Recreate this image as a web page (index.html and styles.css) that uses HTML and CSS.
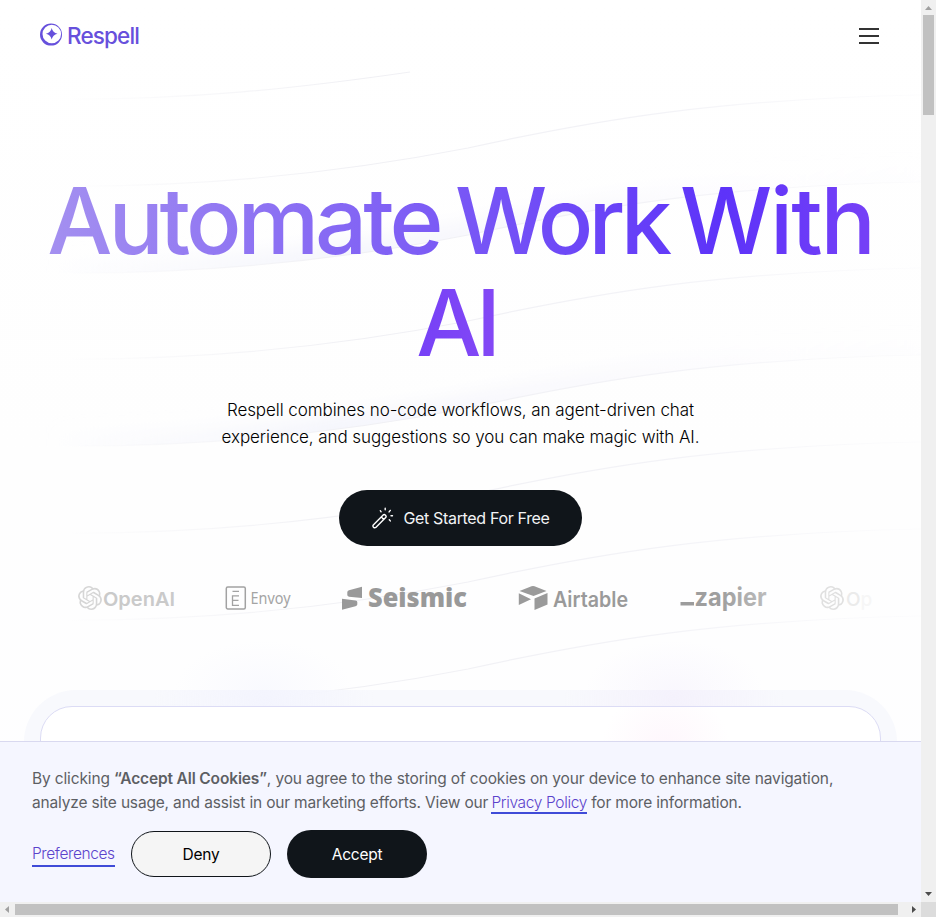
FILE: index.html
```html
<!DOCTYPE html>
<html lang="en">
<head>
<meta charset="utf-8">
<title>Respell</title>
<link rel="stylesheet" href="styles.css">
</head>
<body>
<div class="window">
  <div class="viewport">
    <svg class="waves" viewBox="0 0 921 741" aria-hidden="true">
      <defs>
        <linearGradient id="line" gradientUnits="userSpaceOnUse" x1="60" y1="0" x2="921" y2="0">
          <stop offset="0" stop-color="#f0f0f4" stop-opacity="0"/>
          <stop offset=".35" stop-color="#f0f0f4"/>
          <stop offset=".7" stop-color="#f3f3f7"/>
          <stop offset="1" stop-color="#f5f5f9" stop-opacity=".2"/>
        </linearGradient>
        <linearGradient id="haze" gradientUnits="userSpaceOnUse" x1="30" y1="0" x2="800" y2="0">
          <stop offset="0" stop-color="#f4f5fc" stop-opacity="0"/>
          <stop offset=".4" stop-color="#f4f5fc"/>
          <stop offset="1" stop-color="#f7f5fc" stop-opacity=".1"/>
        </linearGradient>
        <filter id="soft" x="-10%" y="-50%" width="120%" height="200%"><feGaussianBlur stdDeviation="9"/></filter>
        <path id="wave" d="M60 359C190 360 330 348 468 321C600 292 720 272 921 268"/>
        <clipPath id="above"><path d="M0 200H921V268C720 272 600 292 468 321C330 348 190 360 60 359H0Z"/></clipPath>
      </defs>
      <g fill="none" stroke="url(#haze)" stroke-width="26">
        <g transform="translate(0 -86)" clip-path="url(#above)"><use href="#wave" filter="url(#soft)"/></g>
        <g transform="translate(0 87)" clip-path="url(#above)"><use href="#wave" filter="url(#soft)"/></g>
      </g>
      <g fill="none" stroke="url(#line)" stroke-width="1.2">
        <path d="M60 99C190 100 300 88 410 72"/>
        <use href="#wave" y="-173"/><use href="#wave" y="-86"/><use href="#wave"/>
        <use href="#wave" y="87"/><use href="#wave" y="174"/><use href="#wave" y="261"/><use href="#wave" y="348"/>
      </g>
    </svg>

    <header class="nav">
      <a class="brand">
        <svg width="24" height="24" viewBox="0 0 24 24" aria-hidden="true">
          <path fill="#6650dc" fill-rule="evenodd" d="M11 .6a11 11 0 1 0 0 22 11 11 0 0 0 0-22Zm.8 1.1a9.3 9.3 0 1 1 0 18.600a9.300 9.300 0 0 1 0-18.600Z"/>
          <path fill="#6650dc" d="M11.700 5Q12.700 9.800 17.500 10.800Q12.700 11.800 11.700 16.600Q10.700 11.800 5.900 10.800Q10.700 9.800 11.700 5Z"/>
        </svg>
        <span class="brand-name">Respell</span>
      </a>
      <div class="menu"><i></i><i></i><i></i></div>
    </header>

    <main class="hero">
      <h1><span class="fill"><span class="automate">Automate</span> <span class="work">Work</span> <span class="with">With</span><br><span class="ai">AI</span></span></h1>
      <p class="lead"><span class="lead-a">Respell combines no-code workflows, an agent-driven chat</span><br><span class="lead-b">experience, and suggestions so you can make magic with AI.</span></p>
      <a class="cta">
        <svg width="24" height="24" viewBox="0 0 24 24" fill="none" stroke="#fff" stroke-width="1.400" stroke-linecap="round" stroke-linejoin="round" aria-hidden="true">
          <path d="M2.300 18.900 12.200 8.900Q13.300 8 14.500 9.200Q15.700 10.500 14.700 11.500L4.800 21.500Q3.700 22.300 2.500 21.200Q1.500 20 2.300 18.900ZM10.300 11l2.500 2.500M9.300 4.700l.8 1.100M14.200 2.200v1.500M19.300 4.400l-1.200 1.500M21.500 9.700H20M18.300 13.800l1 1.100"/>
        </svg>
        <span>Get Started For Free</span>
      </a>
    </main>

    <section class="logos">
      <svg class="openai" width="100" height="32" viewBox="0 0 100 32">
        <defs><path id="knot" d="M22.2819 9.8211a5.9847 5.9847 0 0 0-.5157-4.9108 6.0462 6.0462 0 0 0-6.5098-2.9A6.0651 6.0651 0 0 0 4.9807 4.1818a5.9847 5.9847 0 0 0-3.9977 2.9 6.0462 6.0462 0 0 0 .7427 7.0966 5.98 5.98 0 0 0 .511 4.9107 6.051 6.051 0 0 0 6.5146 2.9001A5.9847 5.9847 0 0 0 13.2599 24a6.0557 6.0557 0 0 0 5.7718-4.2058 5.9894 5.9894 0 0 0 3.9977-2.9001 6.0557 6.0557 0 0 0-.7475-7.0729zm-9.022 12.6081a4.4755 4.4755 0 0 1-2.8764-1.0408l.1419-.0804 4.7783-2.7582a.7948.7948 0 0 0 .3927-.6813v-6.7369l2.02 1.1686a.071.071 0 0 1 .038.052v5.5826a4.504 4.504 0 0 1-4.4945 4.4944zm-9.6607-4.1254a4.4708 4.4708 0 0 1-.5346-3.0137l.142.0852 4.783 2.7582a.7712.7712 0 0 0 .7806 0l5.8428-3.3685v2.3324a.0804.0804 0 0 1-.0332.0615L9.74 19.9502a4.4992 4.4992 0 0 1-6.1408-1.6464zM2.3408 7.8956a4.485 4.485 0 0 1 2.3655-1.9728V11.6a.7664.7664 0 0 0 .3879.6765l5.8144 3.3543-2.0201 1.1685a.0757.0757 0 0 1-.071 0l-4.8303-2.7865A4.504 4.504 0 0 1 2.3408 7.872zm16.5963 3.8558L13.1038 8.364 15.1192 7.2a.0757.0757 0 0 1 .071 0l4.8303 2.7913a4.4944 4.4944 0 0 1-.6765 8.1042v-5.6772a.79.79 0 0 0-.407-.667zm2.0107-3.0231l-.142-.0852-4.7735-2.7818a.7759.7759 0 0 0-.7854 0L9.409 9.2297V6.8974a.0662.0662 0 0 1 .0284-.0615l4.8303-2.7866a4.4992 4.4992 0 0 1 6.6802 4.66zM8.3065 12.863l-2.02-1.1638a.0804.0804 0 0 1-.038-.0567V6.0742a4.4992 4.4992 0 0 1 7.3757-3.4537l-.142.0805L8.704 5.459a.7948.7948 0 0 0-.3927.6813zm1.0976-2.3654l2.602-1.4998 2.6069 1.4998v2.9994l-2.5974 1.4997-2.6067-1.4997Z"/></defs>
        <use href="#knot" transform="translate(0 4)" fill="#d6d6d6"/>
        <text x="25" y="23.500" textLength="72" lengthAdjust="spacingAndGlyphs" class="t-openai">OpenAI</text>
      </svg>
      <svg class="envoy" width="68" height="32" viewBox="0 0 68 32">
        <rect x="2.300" y="5" width="19" height="22" rx="1.500" fill="none" stroke="#a2a2a2" stroke-width="1.500"/>
        <path d="M8.500 9.300h6.500M15 13.800H8.500v9.500H15M8.500 18.400h6" fill="none" stroke="#a2a2a2" stroke-width="1.300"/>
        <text x="26.500" y="22" textLength="40" lengthAdjust="spacingAndGlyphs" class="t-envoy">Envoy</text>
      </svg>
      <svg class="seismic" width="128" height="32" viewBox="0 0 128 32">
        <path d="M8 8.300 21 4.800V16L8 14.700Q6.300 14.400 6.300 13V10.300Q6.300 8.800 8 8.300ZM1 16.800 14.500 18.400Q16.300 18.700 16.300 20V22.500Q16.300 23.800 14.500 24.300L1 27.800Z" fill="#999"/>
        <text x="27" y="24.500" textLength="99" lengthAdjust="spacingAndGlyphs" class="t-seismic">Seismic</text>
      </svg>
      <svg class="airtable" width="112" height="32" viewBox="0 0 112 32">
        <path d="M1.500 9 13.500 4.300Q15 3.800 16.500 4.300L28.500 9 15.500 14ZM.8 11.300V23L13 17.300ZM29.500 11V22.500L16.500 28V16.500Z" fill="#9a9a9a"/>
        <text x="35" y="24.500" textLength="75" lengthAdjust="spacingAndGlyphs" class="t-airtable">Airtable</text>
      </svg>
      <svg class="zapier" width="90" height="34" viewBox="0 0 90 34">
        <defs><linearGradient id="zf" gradientUnits="userSpaceOnUse" x1="40" x2="88" y1="0" y2="0"><stop stop-color="#9e9e9e"/><stop offset="1" stop-color="#bdbdbd"/></linearGradient></defs>
        <path d="M.5 21h13.500v3.500H.5Z" fill="#9c9c9c"/>
        <text x="14.500" y="24.500" textLength="72" lengthAdjust="spacingAndGlyphs" class="t-zapier" fill="url(#zf)">zapier</text>
      </svg>
      <svg class="openai2" width="56" height="32" viewBox="0 0 56 32">
        <use href="#knot" transform="translate(0 4)" fill="#e0e0e0"/>
        <text x="26" y="23.500" class="t-op"><tspan fill="#ebebeb">O</tspan><tspan fill="#f6f6f6">p</tspan></text>
      </svg>
    </section>

    <div class="halo"><div class="card"></div></div>

    <aside class="cookies">
      <p><span class="note-a">By clicking <b>“Accept All Cookies”</b>, you agree to the storing of cookies on your device to enhance site navigation,</span><br><span class="note-b">analyze site usage, and assist in our marketing efforts. View our <a class="link policy">Privacy Policy</a> for more information.</span></p>
      <div class="actions">
        <a class="link pref">Preferences</a>
        <a class="btn deny">Deny</a>
        <a class="btn accept">Accept</a>
      </div>
    </aside>
  </div>
  <div class="vbar">
    <svg width="15" height="15" viewBox="0 0 15 15"><path d="M4 10 7.500 6 11 10Z" fill="#a0a0a0"/></svg>
    <i></i>
    <svg class="end" width="15" height="15" viewBox="0 0 15 15"><path d="M4 5 7.500 9 11 5Z" fill="#4c4c4c"/></svg>
  </div>
  <div class="hbar">
    <svg width="15" height="15" viewBox="0 0 15 15"><path d="M9 4 5 7.500 9 11Z" fill="#a0a0a0"/></svg>
    <i></i>
    <svg class="end" width="15" height="15" viewBox="0 0 15 15"><path d="M6 4 10 7.500 6 11Z" fill="#4c4c4c"/></svg>
  </div>
  <div class="corner"></div>
</div>
</body>
</html>
```

FILE: styles.css
```css
* { box-sizing: border-box; }
body { margin: 0; font-family: Inter, "Liberation Sans", sans-serif; background: #fff; color: #101418; }
.window { display: grid; grid-template-columns: 921px 15px; grid-template-rows: 902px 15px; width: 936px; height: 917px; overflow: hidden; }
.viewport { position: relative; overflow: hidden; display: flex; flex-direction: column; background: linear-gradient(#fff, #fefefe 50%, #fefeff); }
.waves { position: absolute; left: 0; top: 0; width: 921px; height: 741px; }
.viewport > :not(.waves) { position: relative; }

.nav { display: flex; justify-content: space-between; align-items: center; height: 72px; padding: 0 42px 0 40px; }
.brand { display: flex; align-items: center; gap: 3px; height: 72px; color: #6750dc; font-size: 22.5px; font-weight: 450; }
.brand svg { margin-top: -2px; }
.brand-name { margin-top: -1px; white-space: nowrap; letter-spacing: -.85px; }
.menu { display: grid; gap: 5px; width: 20px; }
.menu i { height: 2px; background: #333; }

.hero { display: flex; flex-direction: column; align-items: center; padding-top: 98px; }
h1 { margin: 0; font-size: 92px; line-height: 102px; font-weight: 500; text-align: center; white-space: nowrap; letter-spacing: -5.5px; }
.fill { background: linear-gradient(90deg, #a490f0, #5d33f9 74%, #8549f5); background-clip: text; -webkit-background-clip: text; color: transparent; }
.automate { letter-spacing: -4.1px; }
.work { margin-left: -3.5px; letter-spacing: -4.8px; }
.with { margin-left: -6.5px; letter-spacing: -2.1px; }
.ai { margin-right: 9px; }
.lead { margin: 23px 0 0; font-size: 17px; font-weight: 350; line-height: 27px; text-align: center; white-space: nowrap; color: #000; }
.lead-a { letter-spacing: -.07px; }
.lead-b { letter-spacing: -.08px; }
.cta { display: flex; align-items: center; justify-content: center; gap: 8px; width: 243px; height: 56px; margin-top: 39px; border-radius: 28px; background: #10151a; color: #f2f3f5; font-size: 16px; letter-spacing: -.34px; white-space: nowrap; }

.logos { display: flex; align-items: center; height: 32px; margin: 36px 0 0 78px; }
.logos svg { flex: none; overflow: visible; }
.envoy { margin-left: 46px; }
.seismic { margin-left: 49px; }
.airtable { margin-left: 49px; }
.zapier { margin-left: 50px; }
.openai2 { margin-left: 50px; }
.t-openai { font: 600 19px Inter, sans-serif; fill: #cacaca; }
.t-op { font: 500 19px Inter, sans-serif; }
.t-envoy { font: 400 17px "Noto Sans", sans-serif; fill: #a4a4a4; }
.t-seismic { font: 800 26px "Open Sans", sans-serif; fill: #999; }
.t-airtable { font: 600 21px Inter, sans-serif; fill: #9a9a9a; }
.t-zapier { font: 700 25px Inter, sans-serif; }

.halo { width: 873px; height: 120px; margin: 76px 0 0 24px; padding: 16px; border-radius: 52px 52px 0 0; background: radial-gradient(circle at 650px 10px, rgba(244, 241, 252, .9), transparent 110px), radial-gradient(circle at 240px 10px, rgba(243, 244, 254, .9), transparent 110px), rgba(246, 247, 252, .8); }
.halo::before { content: ""; position: absolute; left: 560px; top: -50px; width: 180px; height: 50px; background: radial-gradient(ellipse at bottom, rgba(246, 243, 253, .6), transparent 70%); }
.halo::after { content: ""; position: absolute; left: 150px; top: -50px; width: 180px; height: 50px; background: radial-gradient(ellipse at bottom, rgba(246, 247, 254, .6), transparent 70%); }
.card { height: 104px; border: 1px solid #dcdcf5; border-radius: 32px 32px 0 0; background: radial-gradient(circle at 625px 45px, #fef6fc, transparent 65px), #fff; }

.viewport > .cookies { position: absolute; left: 0; bottom: 0; width: 921px; height: 161px; padding: 25px 32px; border-top: 1px solid #d9d9f0; background: #f5f6ff; font-size: 15.5px; }
.cookies p { margin: 0; line-height: 24px; color: #5d5f64; white-space: nowrap; }
.cookies b { font-weight: 600; }
.note-a { letter-spacing: -.14px; }
.note-b { letter-spacing: -.17px; }
.link { color: #5b43cc; border-bottom: 2px solid #3f4bd8; font-weight: 350; }
.policy { margin-left: -1px; letter-spacing: -.35px; }
.actions { display: flex; align-items: center; gap: 16px; margin-top: 15px; }
.pref { width: 83px; padding: 3px 0 2px; letter-spacing: -.4px; white-space: nowrap; }
.btn { display: flex; align-items: center; justify-content: center; width: 140px; height: 48px; border-radius: 24px; letter-spacing: -.25px; }
.deny { height: 46px; border: 1px solid #10151a; background: #f5f5f5; color: #000; }
.accept { background: #10151a; color: #fff; }

.vbar, .hbar { display: flex; align-items: center; background: #f0f0f0; }
.vbar { flex-direction: column; }
.vbar i { width: 11px; height: 100px; background: #c1c1c1; }
.hbar i { width: 883px; height: 11px; background: #c1c1c1; }
.vbar .end { margin-top: auto; }
.hbar .end { margin-left: auto; }
.corner { background: #dcdcdc; }
```
